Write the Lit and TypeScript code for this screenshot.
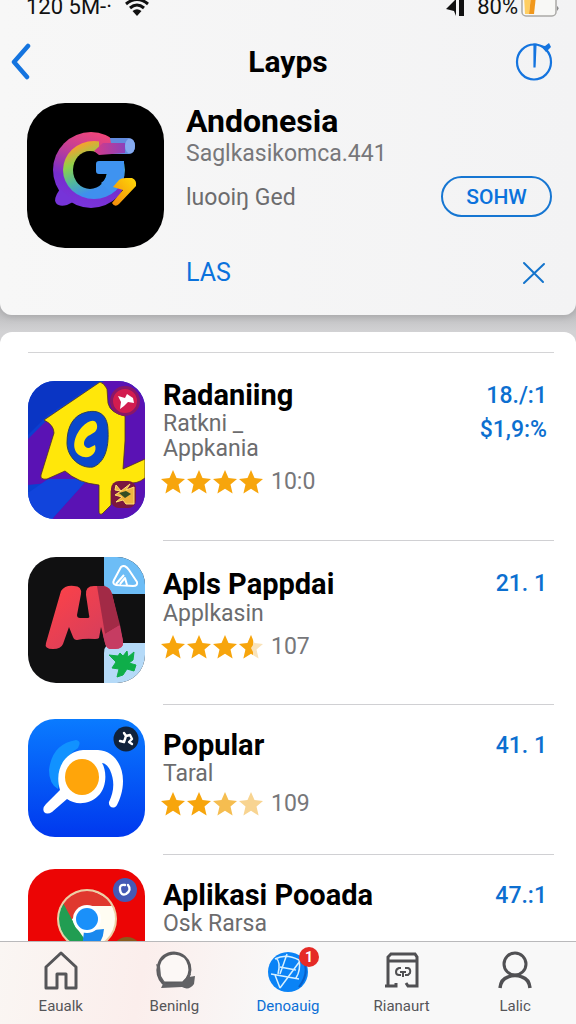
import { LitElement, html, css, svg, nothing, type TemplateResult } from "lit";
import { customElement, property } from "lit/decorators.js";

interface AppEntry {
  name: string;
  subtitle: string[];
  stars: string[];
  count: string;
  figures: string[];
  icon: TemplateResult;
  compact?: boolean;
}

const kiteIcon = html`<svg viewBox="0 0 117 138" aria-hidden="true">
  <defs>
    <clipPath id="kc"><rect width="117" height="138" rx="27" /></clipPath>
  </defs>
  <g clip-path="url(#kc)">
    <rect width="117" height="138" fill="#0b3fd0" />
    <path d="M0 58 22 36 76 0H117V138H24L60 98 0 104Z" fill="#5a12b4" />
    <path d="M0 112 20 98 60 98 24 138H0Z" fill="#1144dc" />
    <path d="M0 0H72L20 34 0 54Z" fill="#0a35c4" />
    <path d="M72 1Q76 2 79 8L80 22Q82 32 97 35L97 60 95 88 117 78V97Q108 104 100 101 86 100 83 110L83 124 74 133Q71 134 71 130L71 104Q50 102 37 90L19 98Q12 99 13 94L26 52Q26 44 16 39Z" fill="#ffe70a" stroke="#54351d" stroke-width=".8" />
    <path d="M59 31C73 28 80 36 80 50 81 68 76 82 65 86 52 88 39 76 39 62 39 46 45 34 59 31Z" fill="#0a48cc" stroke="#2a4060" />
    <path d="M69 44C68 37 60 39 54 46 46 55 43 68 51 74 60 80 70 73 67 64L61 67C55 67 54 60 60 55 66 52 70 50 69 44Z" fill="#ffe70a" />
    <circle cx="97" cy="20" r="13.500" fill="#d21c4f" stroke="#891767" stroke-width="3" />
    <path d="M90 15 97 17 99 13 105 17 106 22 100 21 96 25 92 28 93 21Z" fill="#fff" />
    <rect x="83" y="100" width="25" height="27" rx="8" fill="#7b1740" />
    <path d="M88 104 93 110 87 109ZM102 103 98 109 106 106V123H98L95 119 88 121 94 116 87 114 93 110Z" fill="#f0b43d" stroke="#ffe171" />
    <path d="M91 112 98 110 103 113 97 117Z" fill="#334d22" />
  </g>
</svg>`;

const letterIcon = html`<svg viewBox="0 0 117 126" aria-hidden="true">
  <defs>
    <clipPath id="lc"><rect width="117" height="126" rx="28" /></clipPath>
    <linearGradient id="lg" x1="0" y1="0" x2="1" y2="1">
      <stop offset="0" stop-color="#ff4247" /><stop offset="1" stop-color="#cc3d61" />
    </linearGradient>
  </defs>
  <g clip-path="url(#lc)">
    <rect width="117" height="126" fill="#101011" />
    <path d="M76 0H117V37H86Q76 37 76 27Z" fill="#6dbdf6" />
    <path d="M86 86H117V126H76V96Q76 86 86 86Z" fill="#b5daf8" />
    <path d="M33 34Q37 28 46 29 54 29 53 37L49 58Q49 61 52 61H60Q62 61 61 58L58 38Q57 29 66 29H76Q82 30 84 37L95 84Q96 92 87 92H82Q78 91 77 86L73 70 71 81Q70 82 67 82 57 81 49 83 46 83 45 80L41 70 35 87Q33 92 25 92 16 92 18 86Z" fill="url(#lg)" />
    <path d="M69 29H76Q82 30 84 37L92 68 77 77Z" fill="#a22a46" />
    <path d="M77 77 92 68 95 84Q96 92 87 92H82Q78 91 77 86L75 78Z" fill="#c63c62" />
    <path d="M93 10Q97 7 101 13L109 25Q110 29 105 29L88 28Q84 27 86 23ZM88 27 96 18M92 27 97 21 99 28" fill="none" stroke="#fff" stroke-width="2" stroke-linejoin="round" />
    <path d="M81 98 90 99 92 96 95 99 99 94 100 100 106 95 105 103 101 106 108 108 106 114 99 112 95 118 89 120 91 112 84 111 88 105Z" fill="#0fae4a" stroke="#0fae4a" stroke-linejoin="round" />
  </g>
</svg>`;

const searchIcon = html`<svg viewBox="0 0 117 118" aria-hidden="true">
  <defs>
    <linearGradient id="sb" x1="0" y1="0" x2="0" y2="1">
      <stop offset="0" stop-color="#0a7bff" /><stop offset="1" stop-color="#0038ee" />
    </linearGradient>
  </defs>
  <rect width="117" height="118" rx="27" fill="url(#sb)" />
  <path d="M48 21Q24 25 21 51 21 65 30 70L36 44Q42 34 50 29 54 22 48 21Z" fill="#1192ff" />
  <path d="M55 31H70C86 32 95 46 95 62 95 72 92 80 89 86 86 91 80 88 81 83 86 73 87 62 82 51 80 47 77 44 74 44 79 52 79 69 70 77 61 86 47 86 39 80L24 93Q19 96 16 93 14 89 18 85L32 71C26 51 36 33 55 31Z" fill="#fff" />
  <ellipse cx="54" cy="58" rx="17" ry="18" fill="#ffa50a" />
  <circle cx="98" cy="20" r="12.500" fill="#10223b" />
  <path d="M92 22 96 23 98 17 102 16 104 20 101 23 104 25M98 17 96 14" fill="none" stroke="#fff" stroke-width="2.400" stroke-linecap="round" stroke-linejoin="round" />
</svg>`;

const browserIcon = html`<svg viewBox="0 0 117 118" aria-hidden="true">
  <defs><clipPath id="bc"><circle cx="59" cy="50" r="28" /></clipPath></defs>
  <rect width="117" height="118" rx="27" fill="#ec0505" />
  <circle cx="59" cy="50" r="30" fill="#eccfa4" />
  <g clip-path="url(#bc)">
    <rect x="29" y="20" width="60" height="60" fill="#fffdf2" />
    <path d="M34 26Q59 10 88 37H59L43 51 33 35Z" fill="#e0382e" />
    <path d="M33 30 48 58 58 72 50 82 29 70V40Z" fill="#219d52" />
    <path d="M56 62 76 60Q75 76 62 80H54Z" fill="#1988ee" />
  </g>
  <circle cx="59" cy="50" r="14" fill="#fff" />
  <circle cx="59" cy="50" r="11" fill="#1a90fa" />
  <circle cx="97" cy="21" r="12" fill="#4459b5" />
  <path d="M97 16Q91 15 92 21 93 27 98 25 104 21 100 16" fill="none" stroke="#fff" stroke-width="2.400" stroke-linecap="round" />
  <circle cx="99" cy="83" r="15" fill="#8a5a1c" />
</svg>`;

const entries: AppEntry[] = [
  {
    name: "Radaniing",
    subtitle: ["Ratkni _", "Appkania"],
    stars: ["full", "full", "full", "full"],
    count: "10:0",
    figures: ["18./:1", "$1,9:%"],
    icon: kiteIcon,
  },
  {
    name: "Apls Pappdai",
    subtitle: ["Applkasin"],
    stars: ["full", "full", "full", "half"],
    count: "107",
    figures: ["21. 1"],
    icon: letterIcon,
  },
  {
    name: "Popular",
    subtitle: ["Taral"],
    stars: ["full", "full", "soft", "pale"],
    count: "109",
    figures: ["41. 1"],
    icon: searchIcon,
    compact: true,
  },
  {
    name: "Aplikasi Pooada",
    subtitle: ["Osk Rarsa"],
    stars: ["full", "full", "full", "full"],
    count: "108",
    figures: ["47.:1"],
    icon: browserIcon,
    compact: true,
  },
];

@customElement("star-rating")
export class StarRating extends LitElement {
  @property({ attribute: false }) stars: string[] = [];

  static styles = css`
    :host {
      display: flex;
      gap: 2px;
    }
    .star {
      width: 24px;
      height: 24px;
    }
    .full {
      fill: #f7a50c;
    }
    .soft {
      fill: #f5bd50;
    }
    .pale {
      fill: #f8d491;
    }
    .half {
      fill: #f9e3ba;
    }
    .left {
      fill: #f7a50c;
    }
  `;

  render() {
    return this.stars.map(
      (kind) => html`<svg class="star ${kind}" viewBox="0 0 24 24" aria-hidden="true">
        <path d="M12 0 15.500 8 24 9 17.500 14.600 19.600 23.500 12 18.800 4.400 23.500 6.500 14.600 0 9 8.500 8Z" />
        ${kind === "half"
          ? svg`<path class="left" d="M12 0 14 5V10L12 13 14 17V20L12 18.800 4.400 23.500 6.500 14.600 0 9 8.500 8Z" />`
          : nothing}
      </svg>`
    );
  }
}

@customElement("app-row")
export class AppRow extends LitElement {
  @property({ attribute: false }) entry!: AppEntry;

  static styles = css`
    :host {
      display: block;
    }
    .row {
      display: grid;
      grid-template-columns: 117px 1fr;
      column-gap: 18px;
    }
    .icon {
      padding: 16px 0 22px;
    }
    .compact .icon {
      padding: 14px 0 18px;
    }
    .icon svg {
      display: block;
      width: 100%;
    }
    .body {
      display: flex;
      justify-content: space-between;
      padding-top: 26px;
      border-bottom: 1px solid #d0d0d3;
    }
    .compact .body {
      padding-top: 24px;
    }
    .tall .body {
      padding-top: 14px;
    }
    .name {
      margin: 0;
      font-size: 29px;
      line-height: 34px;
      font-weight: 700;
      color: #000;
      white-space: nowrap;
    }
    .compact .name,
    .tall .name {
      line-height: 32px;
    }
    .subtitle {
      margin: 0;
      font-size: 23px;
      line-height: 25px;
      color: #6c6c6e;
    }
    .rating {
      display: flex;
      align-items: center;
      gap: 8px;
      margin: 9px 0 0 -2px;
      font-size: 23px;
      line-height: 24px;
      color: #77777a;
    }
    .compact .rating {
      margin-top: 6px;
    }
    .figures {
      display: flex;
      flex-direction: column;
      align-items: flex-end;
      padding-right: 7px;
      font-size: 23px;
      line-height: 34px;
      font-weight: 500;
      color: #0c6fd0;
      white-space: pre;
    }
  `;

  render() {
    const e = this.entry;
    const kind = e.compact ? "compact" : e.subtitle.length > 1 ? "tall" : "";
    return html`<article class="row ${kind}">
      <div class="icon">${e.icon}</div>
      <div class="body">
        <div class="lead">
          <h2 class="name">${e.name}</h2>
          ${e.subtitle.map((line) => html`<p class="subtitle">${line}</p>`)}
          <div class="rating">
            <star-rating .stars=${e.stars}></star-rating>
            <span>${e.count}</span>
          </div>
        </div>
        <div class="figures">${e.figures.map((f) => html`<span>${f}</span>`)}</div>
      </div>
    </article>`;
  }
}

@customElement("app-root")
export class AppRoot extends LitElement {
  static styles = css`
    :host {
      display: flex;
      flex-direction: column;
      height: 100vh;
      overflow: hidden;
      background: #fff;
      font-family: Roboto, "Liberation Sans", sans-serif;
    }
    button {
      font: inherit;
      color: #0b72dc;
      background: none;
      border: 0;
      padding: 0;
    }
    svg {
      display: block;
    }
    .screen {
      flex: 1;
      min-height: 0;
      overflow: hidden;
      background: linear-gradient(#bcbcbe 310px, #d2d2d4 332px);
    }
    .top {
      overflow: hidden;
      padding-bottom: 27px;
      border-radius: 0 0 12px 12px;
      background: linear-gradient(90deg, #f7f7f7, #f3f3f4);
      box-shadow: 0 2px 6px #a8a8aa;
    }
    .status {
      display: flex;
      justify-content: space-between;
      align-items: center;
      height: 28px;
      margin-top: -7px;
      padding: 0 17px 0 26px;
      font-size: 22px;
      line-height: 28px;
      color: #111;
    }
    .cluster {
      display: flex;
      align-items: center;
      gap: 12px;
    }
    .power {
      display: flex;
      align-items: center;
      gap: 3px;
    }
    .nav {
      display: grid;
      grid-template-columns: 60px 1fr 60px;
      align-items: center;
      height: 81px;
      padding: 0 20px 0 10px;
    }
    .nav .end {
      justify-self: end;
    }
    .nav h1 {
      margin: 0;
      padding-left: 10px;
      text-align: center;
      font-size: 30px;
      line-height: 40px;
      font-weight: 700;
    }
    .hero {
      display: grid;
      grid-template-columns: 137px 1fr auto;
      column-gap: 22px;
      padding: 1px 24px 0 27px;
    }
    .hero h2 {
      margin: 0;
      font-size: 32px;
      line-height: 36px;
      font-weight: 700;
    }
    .hero p {
      margin: 0;
      font-size: 23px;
      line-height: 30px;
      color: #77777a;
      white-space: nowrap;
    }
    .hero .note {
      padding-top: 14px;
      color: #6c6c6e;
    }
    .side {
      display: flex;
      align-items: flex-start;
      padding-top: 73px;
    }
    .pill {
      width: 111px;
      height: 41px;
      border: 2px solid #1676d2;
      border-radius: 21px;
      font-size: 21px;
      font-weight: 500;
    }
    .links {
      display: flex;
      justify-content: space-between;
      align-items: center;
      padding: 10px 30px 0 186px;
    }
    .links .text {
      font-size: 25px;
      line-height: 30px;
    }
    .sheet {
      margin-top: 17px;
      padding: 20px 22px 0 28px;
      border-radius: 12px 12px 0 0;
      background: #fff;
    }
    .list {
      border-top: 1px solid #d4d4d6;
      padding-top: 12px;
    }
    .tabs {
      display: flex;
      height: 82px;
      flex: none;
      padding: 0 4px;
      border-top: 1px solid #b9b9bb;
      background: linear-gradient(100deg, #faf6f3, #fbeeec 25%, #f8f8f8 48%);
    }
    .tab {
      flex: 1;
      display: flex;
      flex-direction: column;
      align-items: center;
      gap: 5px;
      padding-top: 8px;
      font-size: 15px;
      line-height: 18px;
      color: #555558;
      text-decoration: none;
    }
    .tab svg {
      width: 44px;
      height: 42px;
    }
    .active {
      color: #0b6fd6;
    }
    .glyph {
      position: relative;
    }
    .badge {
      position: absolute;
      top: -3px;
      right: -9px;
      width: 20px;
      height: 20px;
      border-radius: 50%;
      background: #e52a26;
      color: #fff;
      font-size: 14px;
      line-height: 20px;
      font-weight: 700;
      text-align: center;
    }
  `;

  private tab(label: string, glyph: TemplateResult, active = false, badge = "") {
    return html`<a class="tab ${active ? "active" : ""}" href="#${label}">
      <span class="glyph">${glyph}${badge ? html`<span class="badge">${badge}</span>` : nothing}</span>
      <span>${label}</span>
    </a>`;
  }

  render() {
    return html`
      <main class="screen">
        <section class="top">
          <div class="status">
            <span class="cluster">
              <span>120 5M-·</span>
              <svg width="26" height="18" viewBox="0 0 24 18" aria-hidden="true">
                <path d="M1 6Q12 -3 23 6M5 10Q12 4 19 10" fill="none" stroke="#111" stroke-width="3" />
                <path d="M7.500 13Q12 9.500 16.500 13L12 18Z" fill="#111" />
              </svg>
            </span>
            <span class="cluster">
              <svg width="20" height="20" viewBox="0 0 18 20" aria-hidden="true">
                <path d="M0 12 10 2V19L8 14ZM13 0H18V19H13Z" fill="#111" />
              </svg>
              <span class="power">
                <span>80%</span>
                <svg width="38" height="22" viewBox="0 0 38 22" aria-hidden="true">
                  <rect x="1" y="-6" width="34" height="26" rx="4" fill="#f8f8f6" stroke="#aaa9a6" stroke-width="1.500" />
                  <path d="M3 0H10L8 18H4Z" fill="#ffce62" />
                  <path d="M10 0H15L13 18H8Z" fill="#f1981c" />
                  <path d="M36 10Q39 12 36 15Z" fill="#888" />
                </svg>
              </span>
            </span>
          </div>
          <header class="nav">
            <button aria-label="Back">
              <svg width="24" height="38" viewBox="0 0 24 38">
                <path d="M18 3 4 19 17 34" fill="none" stroke="#1474df" stroke-width="4.500" stroke-linecap="round" stroke-linejoin="round" />
              </svg>
            </button>
            <h1>Layps</h1>
            <button class="end" aria-label="Timer">
              <svg width="42" height="40" viewBox="0 0 42 40">
                <ellipse cx="20" cy="20" rx="17" ry="17.500" fill="none" stroke="#1474df" stroke-width="2.200" />
                <path d="M20 2 22 2 21 25 20 25Z" fill="#1474df" stroke="#1474df" stroke-width="1.200" />
                <path d="M26 3 31 4 35 1 37 5 32 10Z" fill="#1474df" />
              </svg>
            </button>
          </header>
          <div class="hero">
            <svg width="137" height="145" viewBox="0 0 137 145" aria-hidden="true">
              <defs>
                <linearGradient id="outer" x1=".6" y1="0" x2=".3" y2="1">
                  <stop offset="0" stop-color="#f34679" /><stop offset=".35" stop-color="#b93d9b" /><stop offset=".65" stop-color="#762dcc" /><stop offset="1" stop-color="#7a35dd" />
                </linearGradient>
                <linearGradient id="inner" x1=".35" y1="0" x2=".75" y2=".9">
                  <stop offset="0" stop-color="#ff9d2c" /><stop offset=".3" stop-color="#8fd04a" /><stop offset=".6" stop-color="#50b7a0" /><stop offset=".85" stop-color="#3f90ee" />
                </linearGradient>
                <linearGradient id="bar"><stop offset="0" stop-color="#d63b87" /><stop offset="1" stop-color="#8c41ba" /></linearGradient>
                <linearGradient id="tip" x1="1" y1="0" x2="0" y2="1"><stop offset="0" stop-color="#ffd907" /><stop offset="1" stop-color="#f3880d" /></linearGradient>
                <clipPath id="outerCut"><path d="M0 0H76L84 40V54H97V84L86 104V137H0Z" /></clipPath>
                <clipPath id="innerCut"><path d="M30 30H72V58H100V100H30Z" /></clipPath>
              </defs>
              <rect width="137" height="145" rx="38" fill="#000" />
              <path d="M78 35H102Q108 36 108 43 108 50 102 51H78Z" fill="#628bde" />
              <g clip-path="url(#outerCut)">
                <circle cx="64" cy="67" r="38" fill="url(#outer)" />
              </g>
              <path d="M33 86Q26 96 29 100 32 104 40 102L48 98Z" fill="#7634d8" />
              <ellipse cx="67" cy="67" rx="31" ry="29" fill="url(#inner)" clip-path="url(#innerCut)" />
              <ellipse cx="63" cy="67" rx="17" ry="19" fill="#000" />
              <path d="M66 51H110V58H66Z" fill="#000" />
              <path d="M72 58H97V68C97 79 91 87 84 90L74 80Q79 77 80 71H72Q69 71 69 68V61Q69 58 72 58Z" fill="#3f93f0" />
              <path d="M67 48 76 40H98V50L72 52Z" fill="url(#bar)" />
              <ellipse cx="103" cy="43" rx="5" ry="7.500" fill="#85aaf0" />
              <path d="M86 84 92 77Q94 75 99 75H105Q110 77 109 83L92 101Q88 105 85 100L96 87Z" fill="url(#tip)" />
            </svg>
            <div>
              <h2>Andonesia</h2>
              <p>Saglkasikomca.441</p>
              <p class="note">luooiŋ Ged</p>
            </div>
            <div class="side"><button class="pill">SOHW</button></div>
          </div>
          <div class="links">
            <button class="text">LAS</button>
            <button aria-label="Close">
              <svg width="24" height="24" viewBox="0 0 24 24">
                <path d="M2 2 21 21M22 3 2 22" stroke="#1474cc" stroke-width="2" stroke-linecap="round" />
              </svg>
            </button>
          </div>
        </section>
        <section class="sheet">
          <div class="list">${entries.map((e) => html`<app-row .entry=${e}></app-row>`)}</div>
        </section>
      </main>
      <nav class="tabs">
        ${this.tab(
          "Eaualk",
          html`<svg viewBox="0 0 44 42"><path d="M7 17 22 3 37 17V38H27V24H18V38H7Z" fill="none" stroke="#555558" stroke-width="3" stroke-linejoin="round" /></svg>`
        )}
        ${this.tab(
          "Beninlg",
          html`<svg viewBox="0 0 44 42"><path d="M11 33C2 23 5 4 22 3 39 4 43 24 31 33Z" fill="#fcf8f6" stroke="#5c5c5f" stroke-width="3" /><path d="M4 14 8 16 9 26 14 34 31 32 35 27Q36 23 39 24L37 27 43 26 42 34Q37 41 30 37L9 38 12 32Q5 28 6 21Z" fill="#626265" /></svg>`
        )}
        ${this.tab(
          "Denoauig",
          html`<svg viewBox="0 0 44 42"><circle cx="22" cy="22" r="20" fill="#0a83f6" /><path d="M37 9Q44 23 33 37" fill="none" stroke="#0760ca" stroke-width="2" /><path d="M9 9Q20 3 33 10M10 8Q15 12 12 24M5 24 33 29M14 38 34 11M9 25 14 38M21 4 14 24M33 10Q35 20 30 28M14 17 30 20" fill="none" stroke="#d6f0ff" stroke-width="1.500" /></svg>`,
          true,
          "1"
        )}
        ${this.tab(
          "Rianaurt",
          html`<svg viewBox="0 0 44 42"><path d="M5 36H16V33M8 36V7L11 4H35L37 7V36H28L26 33M8 11H37" fill="none" stroke="#505053" stroke-width="3" /><path d="M21 18H19Q16 19 16 22T19 25H21M25 18H28Q31 19 30 23L28 25H25M23 21V27M20 22H26" fill="none" stroke="#505053" stroke-width="2" /></svg>`
        )}
        ${this.tab(
          "Lalic",
          html`<svg viewBox="0 0 44 42"><circle cx="22" cy="14" r="11" fill="none" stroke="#505053" stroke-width="3" /><path d="M7 38Q8 29 15 27 22 24 29 27 36 29 37 38" fill="none" stroke="#505053" stroke-width="3.500" /></svg>`
        )}
      </nav>
    `;
  }
}
